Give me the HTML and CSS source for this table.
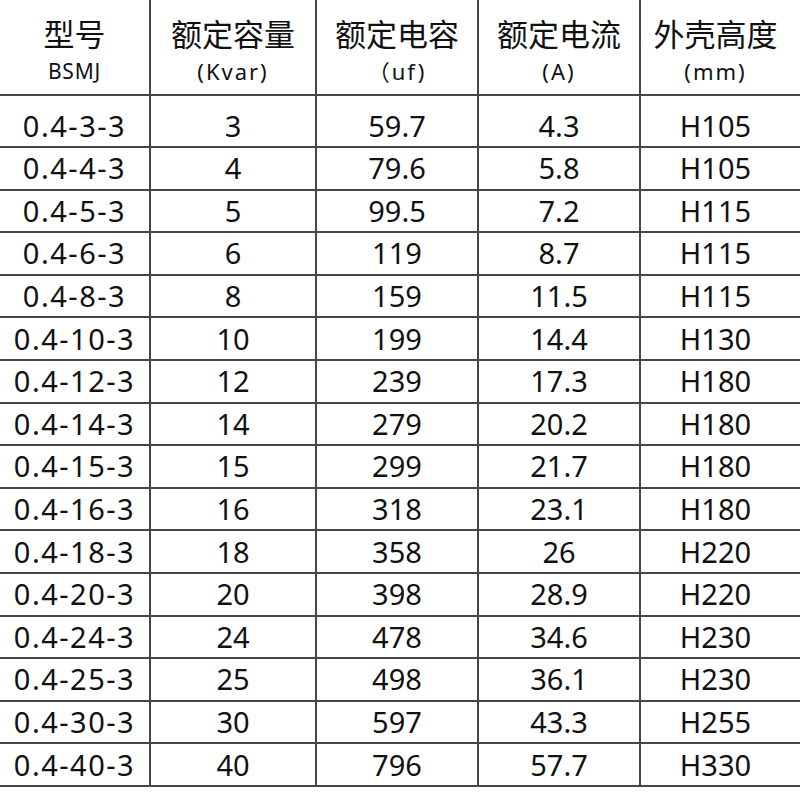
FILE: index.html
```html
<!DOCTYPE html>
<html lang="zh-CN">
<head>
<meta charset="utf-8">
<title>BSMJ 参数表</title>
<link rel="stylesheet" href="styles.css">
</head>
<body>
<table class="spec">
  <colgroup>
    <col class="c1"><col class="c2"><col class="c3"><col class="c4"><col class="c5">
  </colgroup>
  <thead>
    <tr class="head">
      <th><div class="zh">型号</div><div class="en">BSMJ</div></th>
      <th><div class="zh">额定容量</div><div class="en paren">(Kvar)</div></th>
      <th><div class="zh">额定电容</div><div class="en paren">（uf)</div></th>
      <th><div class="zh">额定电流</div><div class="en paren">(A)</div></th>
      <th><div class="zh">外壳高度</div><div class="en paren">(mm)</div></th>
    </tr>
  </thead>
  <tbody>
    <tr class="first"><td class="model">0.4-3-3</td><td>3</td><td>59.7</td><td>4.3</td><td>H105</td></tr>
    <tr><td class="model">0.4-4-3</td><td>4</td><td>79.6</td><td>5.8</td><td>H105</td></tr>
    <tr><td class="model">0.4-5-3</td><td>5</td><td>99.5</td><td>7.2</td><td>H115</td></tr>
    <tr><td class="model">0.4-6-3</td><td>6</td><td>119</td><td>8.7</td><td>H115</td></tr>
    <tr><td class="model">0.4-8-3</td><td>8</td><td>159</td><td>11.5</td><td>H115</td></tr>
    <tr><td class="model">0.4-10-3</td><td>10</td><td>199</td><td>14.4</td><td>H130</td></tr>
    <tr><td class="model">0.4-12-3</td><td>12</td><td>239</td><td>17.3</td><td>H180</td></tr>
    <tr><td class="model">0.4-14-3</td><td>14</td><td>279</td><td>20.2</td><td>H180</td></tr>
    <tr><td class="model">0.4-15-3</td><td>15</td><td>299</td><td>21.7</td><td>H180</td></tr>
    <tr><td class="model">0.4-16-3</td><td>16</td><td>318</td><td>23.1</td><td>H180</td></tr>
    <tr><td class="model">0.4-18-3</td><td>18</td><td>358</td><td>26</td><td>H220</td></tr>
    <tr><td class="model">0.4-20-3</td><td>20</td><td>398</td><td>28.9</td><td>H220</td></tr>
    <tr><td class="model">0.4-24-3</td><td>24</td><td>478</td><td>34.6</td><td>H230</td></tr>
    <tr><td class="model">0.4-25-3</td><td>25</td><td>498</td><td>36.1</td><td>H230</td></tr>
    <tr><td class="model">0.4-30-3</td><td>30</td><td>597</td><td>43.3</td><td>H255</td></tr>
    <tr><td class="model">0.4-40-3</td><td>40</td><td>796</td><td>57.7</td><td>H330</td></tr>
  </tbody>
</table>
</body>
</html>
```

FILE: styles.css
```css
html, body {
  margin: 0;
  padding: 0;
  background: #ffffff;
}

body {
  font-family: "Noto Sans", "Noto Sans CJK SC", sans-serif;
  color: #111111;
}

.spec {
  width: 800px;
  table-layout: fixed;
  border-collapse: collapse;
}

.c1 { width: 150px; }
.c2 { width: 166px; }
.c3 { width: 162px; }
.c4 { width: 162px; }
.c5 { width: 160px; }

.spec th,
.spec td {
  padding: 0;
  text-align: center;
  border-bottom: 2px solid #464646;
  border-right: 2px solid #464646;
  font-weight: normal;
}

.spec th:last-child,
.spec td:last-child {
  border-right: none;
  padding-right: 10px;
}

.head th {
  height: 95px;
  vertical-align: top;
  padding-top: 13px;
  box-sizing: border-box;
}

.zh {
  font-family: "Noto Sans CJK SC", sans-serif;
  font-size: 31px;
  line-height: 40px;
}

.en {
  font-size: 21px;
  line-height: 30px;
  margin-top: 3px;
  letter-spacing: 0.8px;
}

.en.paren {
  font-size: 22px;
  letter-spacing: 2px;
}

.spec tbody td {
  height: 40.6px;
  font-size: 29px;
  line-height: 34px;
  vertical-align: middle;
}

.spec tbody tr.first td {
  height: 52px;
  padding-top: 10px;
  box-sizing: border-box;
}

.model {
  letter-spacing: 1.5px;
}
```
